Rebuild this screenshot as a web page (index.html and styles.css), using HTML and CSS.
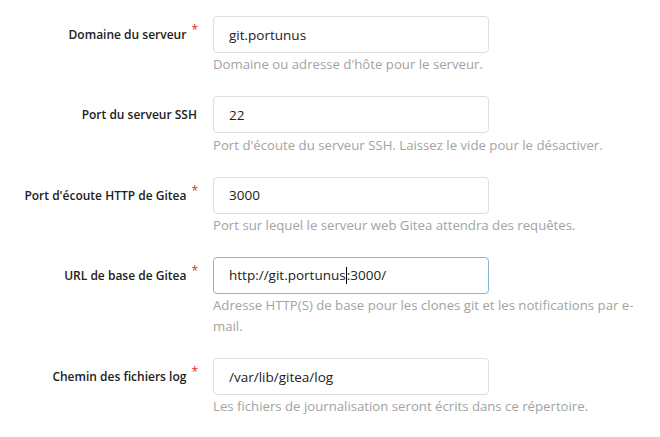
FILE: index.html
```html
<!DOCTYPE html>
<html lang="fr">
<head>
<meta charset="utf-8">
<title>Installation</title>
<link rel="stylesheet" href="styles.css">
</head>
<body>
<form class="form">
  <div class="field required">
    <label class="label">Domaine du serveur</label>
    <div class="control">
      <div class="input">git.portunus</div>
      <div class="help">Domaine ou adresse d'hôte pour le serveur.</div>
    </div>
  </div>
  <div class="field">
    <label class="label">Port du serveur SSH</label>
    <div class="control">
      <div class="input">22</div>
      <div class="help">Port d'écoute du serveur SSH. Laissez le vide pour le désactiver.</div>
    </div>
  </div>
  <div class="field required">
    <label class="label">Port d'écoute HTTP de Gitea</label>
    <div class="control">
      <div class="input">3000</div>
      <div class="help">Port sur lequel le serveur web Gitea attendra des requêtes.</div>
    </div>
  </div>
  <div class="field required">
    <label class="label">URL de base de Gitea</label>
    <div class="control">
      <div class="input focus">http://git.portunus<span class="caret"></span>:3000/</div>
      <div class="help">Adresse HTTP(S) de base pour les clones git et les notifications par e-mail.</div>
    </div>
  </div>
  <div class="field required">
    <label class="label">Chemin des fichiers log</label>
    <div class="control">
      <div class="input">/var/lib/gitea/log</div>
      <div class="help">Les fichiers de journalisation seront écrits dans ce répertoire.</div>
    </div>
  </div>
</form>
</body>
</html>
```
FILE: styles.css
```css
html, body {
  margin: 0;
  padding: 0;
  background: #fff;
}
body {
  font-family: "Open Sans", "Noto Sans", sans-serif;
  font-size: 13px;
  color: #212121;
}
.form {
  display: flex;
  flex-direction: column;
  gap: 21px;
  padding: 16px 20px 0 0;
}
.field {
  display: grid;
  grid-template-columns: 197px 1fr;
  column-gap: 16px;
}
.label {
  height: 37px;
  display: flex;
  align-items: center;
  justify-content: flex-end;
  font-weight: 600;
  font-size: 12px;
  color: #212121;
}
.required .label::after {
  content: "*";
  color: #db2828;
  font-weight: 400;
  font-size: 12px;
  margin: -10px -1px 0 5px;
}
.input {
  box-sizing: border-box;
  width: 276px;
  height: 37px;
  border: 1px solid #dedede;
  border-radius: 4px;
  padding: 0 15px;
  display: flex;
  align-items: center;
  font-size: 13.5px;
  color: #212121;
}
.input.focus {
  border-color: #85b7d9;
}
.caret {
  display: inline-block;
  width: 1px;
  height: 17px;
  background: #000;
}
.help {
  margin-top: 1.25px;
  line-height: 21px;
  color: #a3a3a3;
  font-size: 13.2px;
}
```
